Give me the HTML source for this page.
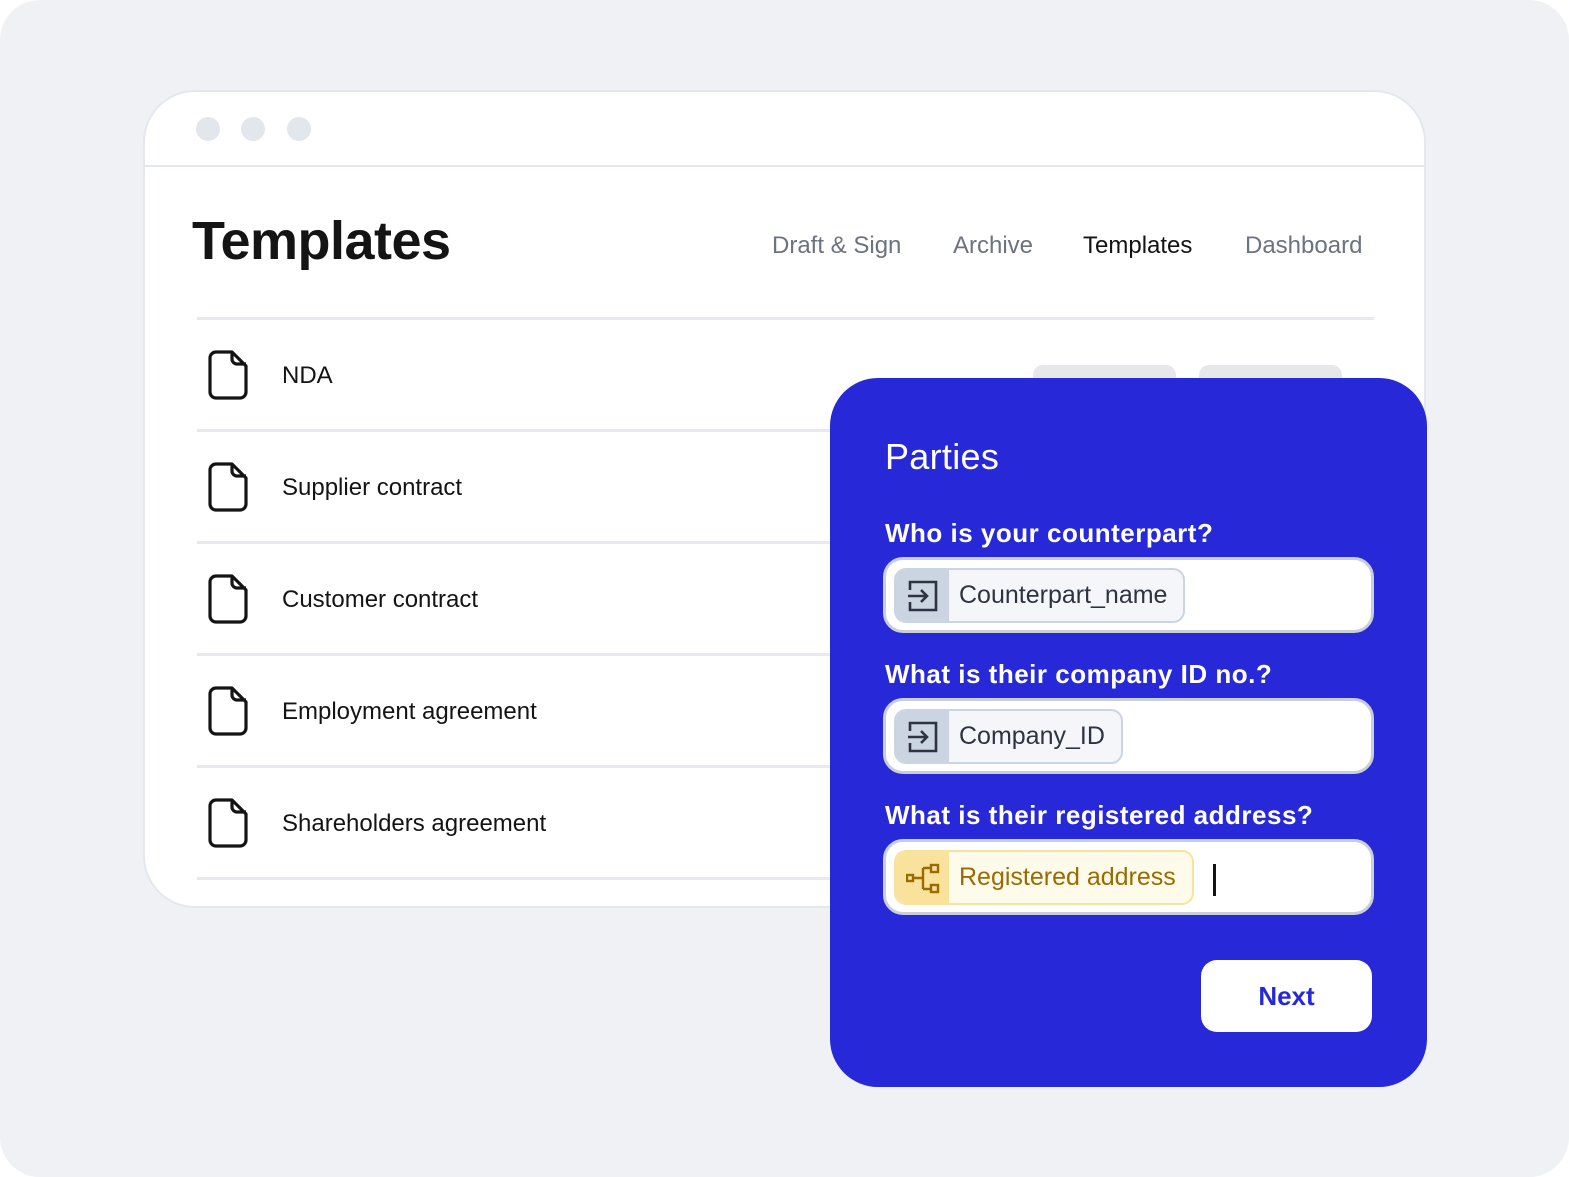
<!DOCTYPE html>
<html><head><style>
*{margin:0;padding:0;box-sizing:border-box}
body{width:1569px;height:1177px;background:#fff;font-family:"Liberation Sans",Arial,sans-serif;position:relative;overflow:hidden}
.bg{position:absolute;left:0;top:0;width:1569px;height:1177px;background:#eff1f5;border-radius:40px}
.win{position:absolute;left:143px;top:90px;width:1283px;height:818px;background:#fff;border:2px solid #e4e8ee;border-radius:52px;overflow:hidden}
.dot{position:absolute;top:25px;width:24px;height:24px;border-radius:50%;background:#e2e7ee}
.hl{position:absolute;left:0;right:0;top:73px;height:2px;background:#e4e8ee}
.title{position:absolute;left:47px;top:118px;font-size:54px;font-weight:600;color:#141414;letter-spacing:-0.5px}
.nav{position:absolute;top:140px;font-size:24px;color:#6b7280;white-space:nowrap}
.line{position:absolute;left:52px;width:1177px;height:3px;background:#e6eaf0}
.ph{position:absolute;top:273px;width:143px;height:40px;background:#e5e7eb;border-radius:10px}
.rt{position:absolute;left:282px;font-size:24px;color:#141414;white-space:nowrap}
.panel{position:absolute;left:830px;top:378px;width:597px;height:709px;background:#2729d9;border-radius:48px}
.panel h2{position:absolute;left:55px;top:58px;font-size:36px;font-weight:500;color:#fff;letter-spacing:0.3px}
.lbl{position:absolute;left:55px;font-size:26px;font-weight:700;color:#fff;white-space:nowrap;letter-spacing:0.5px}
.inp{position:absolute;left:53px;width:491px;height:76px;background:#fff;border:3px solid #c9ced8;border-radius:20px}
.chip{position:absolute;left:8px;top:8px;height:55px;border:2px solid #cbd5e1;border-radius:12px;background:#f4f6fa;display:flex;align-items:center;overflow:hidden}
.chip .ic{width:53px;height:100%;background:#cbd5e1;display:flex;align-items:center;justify-content:center}
.chip .t{padding:0 16px 0 10px;font-size:25px;color:#2d3340;white-space:nowrap}
.chip.y{border-color:#f7e3a0;background:#fefbea}
.chip.y .ic{background:#f9e29c}
.chip.y .t{color:#9a6b00}
.btn{position:absolute;left:371px;top:582px;width:171px;height:72px;background:#fff;border-radius:16px;color:#2729d9;font-size:26px;font-weight:700;text-align:center;line-height:72px}
</style></head><body>
<div class="bg"></div>
<div class="win">
<div class="dot" style="left:51px"></div><div class="dot" style="left:96px"></div><div class="dot" style="left:142px"></div>
<div class="hl"></div>
<div class="title">Templates</div>
<div class="nav" style="left:627px">Draft &amp; Sign</div>
<div class="nav" style="left:808px">Archive</div>
<div class="nav" style="left:938px;color:#141414">Templates</div>
<div class="nav" style="left:1100px">Dashboard</div>
<div class="line" style="top:225px"></div>
<div class="ph" style="left:888px"></div><div class="ph" style="left:1054px"></div>
<div class="line" style="top:337px"></div>
<div class="line" style="top:449px"></div>
<div class="line" style="top:561px"></div>
<div class="line" style="top:673px"></div>
<div class="line" style="top:785px"></div>
</div>
<svg style="position:absolute;left:208px;top:350px" width="42" height="50" viewBox="0 0 42 50"><path d="M8 2h16l14 14v26a6 6 0 0 1-6 6H8a6 6 0 0 1-6-6V8a6 6 0 0 1 6-6z M24 2v7a5 5 0 0 0 5 5h9" fill="none" stroke="#141414" stroke-width="3.2" stroke-linejoin="round"/></svg>
<div class="rt" style="top:362px">NDA</div>
<svg style="position:absolute;left:208px;top:462px" width="42" height="50" viewBox="0 0 42 50"><path d="M8 2h16l14 14v26a6 6 0 0 1-6 6H8a6 6 0 0 1-6-6V8a6 6 0 0 1 6-6z M24 2v7a5 5 0 0 0 5 5h9" fill="none" stroke="#141414" stroke-width="3.2" stroke-linejoin="round"/></svg>
<div class="rt" style="top:474px">Supplier contract</div>
<svg style="position:absolute;left:208px;top:574px" width="42" height="50" viewBox="0 0 42 50"><path d="M8 2h16l14 14v26a6 6 0 0 1-6 6H8a6 6 0 0 1-6-6V8a6 6 0 0 1 6-6z M24 2v7a5 5 0 0 0 5 5h9" fill="none" stroke="#141414" stroke-width="3.2" stroke-linejoin="round"/></svg>
<div class="rt" style="top:586px">Customer contract</div>
<svg style="position:absolute;left:208px;top:686px" width="42" height="50" viewBox="0 0 42 50"><path d="M8 2h16l14 14v26a6 6 0 0 1-6 6H8a6 6 0 0 1-6-6V8a6 6 0 0 1 6-6z M24 2v7a5 5 0 0 0 5 5h9" fill="none" stroke="#141414" stroke-width="3.2" stroke-linejoin="round"/></svg>
<div class="rt" style="top:698px">Employment agreement</div>
<svg style="position:absolute;left:208px;top:798px" width="42" height="50" viewBox="0 0 42 50"><path d="M8 2h16l14 14v26a6 6 0 0 1-6 6H8a6 6 0 0 1-6-6V8a6 6 0 0 1 6-6z M24 2v7a5 5 0 0 0 5 5h9" fill="none" stroke="#141414" stroke-width="3.2" stroke-linejoin="round"/></svg>
<div class="rt" style="top:810px">Shareholders agreement</div>
<div class="panel">
<h2>Parties</h2>
<div class="lbl" style="top:140px">Who is your counterpart?</div>
<div class="inp" style="top:179px"><div class="chip"><div class="ic"><svg width="34" height="34" viewBox="0 0 34 34"><path d="M4 11V3h26v28H4v-8 M2 17h19 M15 11l6 6-6 6" fill="none" stroke="#2d3340" stroke-width="2.6"/></svg></div><div class="t">Counterpart_name</div></div></div>
<div class="lbl" style="top:281px">What is their company ID no.?</div>
<div class="inp" style="top:320px"><div class="chip"><div class="ic"><svg width="34" height="34" viewBox="0 0 34 34"><path d="M4 11V3h26v28H4v-8 M2 17h19 M15 11l6 6-6 6" fill="none" stroke="#2d3340" stroke-width="2.6"/></svg></div><div class="t">Company_ID</div></div></div>
<div class="lbl" style="top:422px">What is their registered address?</div>
<div class="inp" style="top:461px"><div class="chip y"><div class="ic"><svg width="34" height="34" viewBox="0 0 34 34"><rect x="1" y="14" width="6" height="6" fill="none" stroke="#9a6b00" stroke-width="2.4"/><rect x="25" y="4" width="7" height="7" fill="none" stroke="#9a6b00" stroke-width="2.4"/><rect x="25" y="24" width="7" height="7" fill="none" stroke="#9a6b00" stroke-width="2.4"/><path d="M7 17h10 M17 7v21 M17 7h8 M17 28h8" fill="none" stroke="#9a6b00" stroke-width="2.4"/></svg></div><div class="t">Registered address</div></div>
<div style="position:absolute;left:327px;top:22px;width:3px;height:32px;background:#141414"></div></div>
<div class="btn">Next</div>
</div>
</body></html>
